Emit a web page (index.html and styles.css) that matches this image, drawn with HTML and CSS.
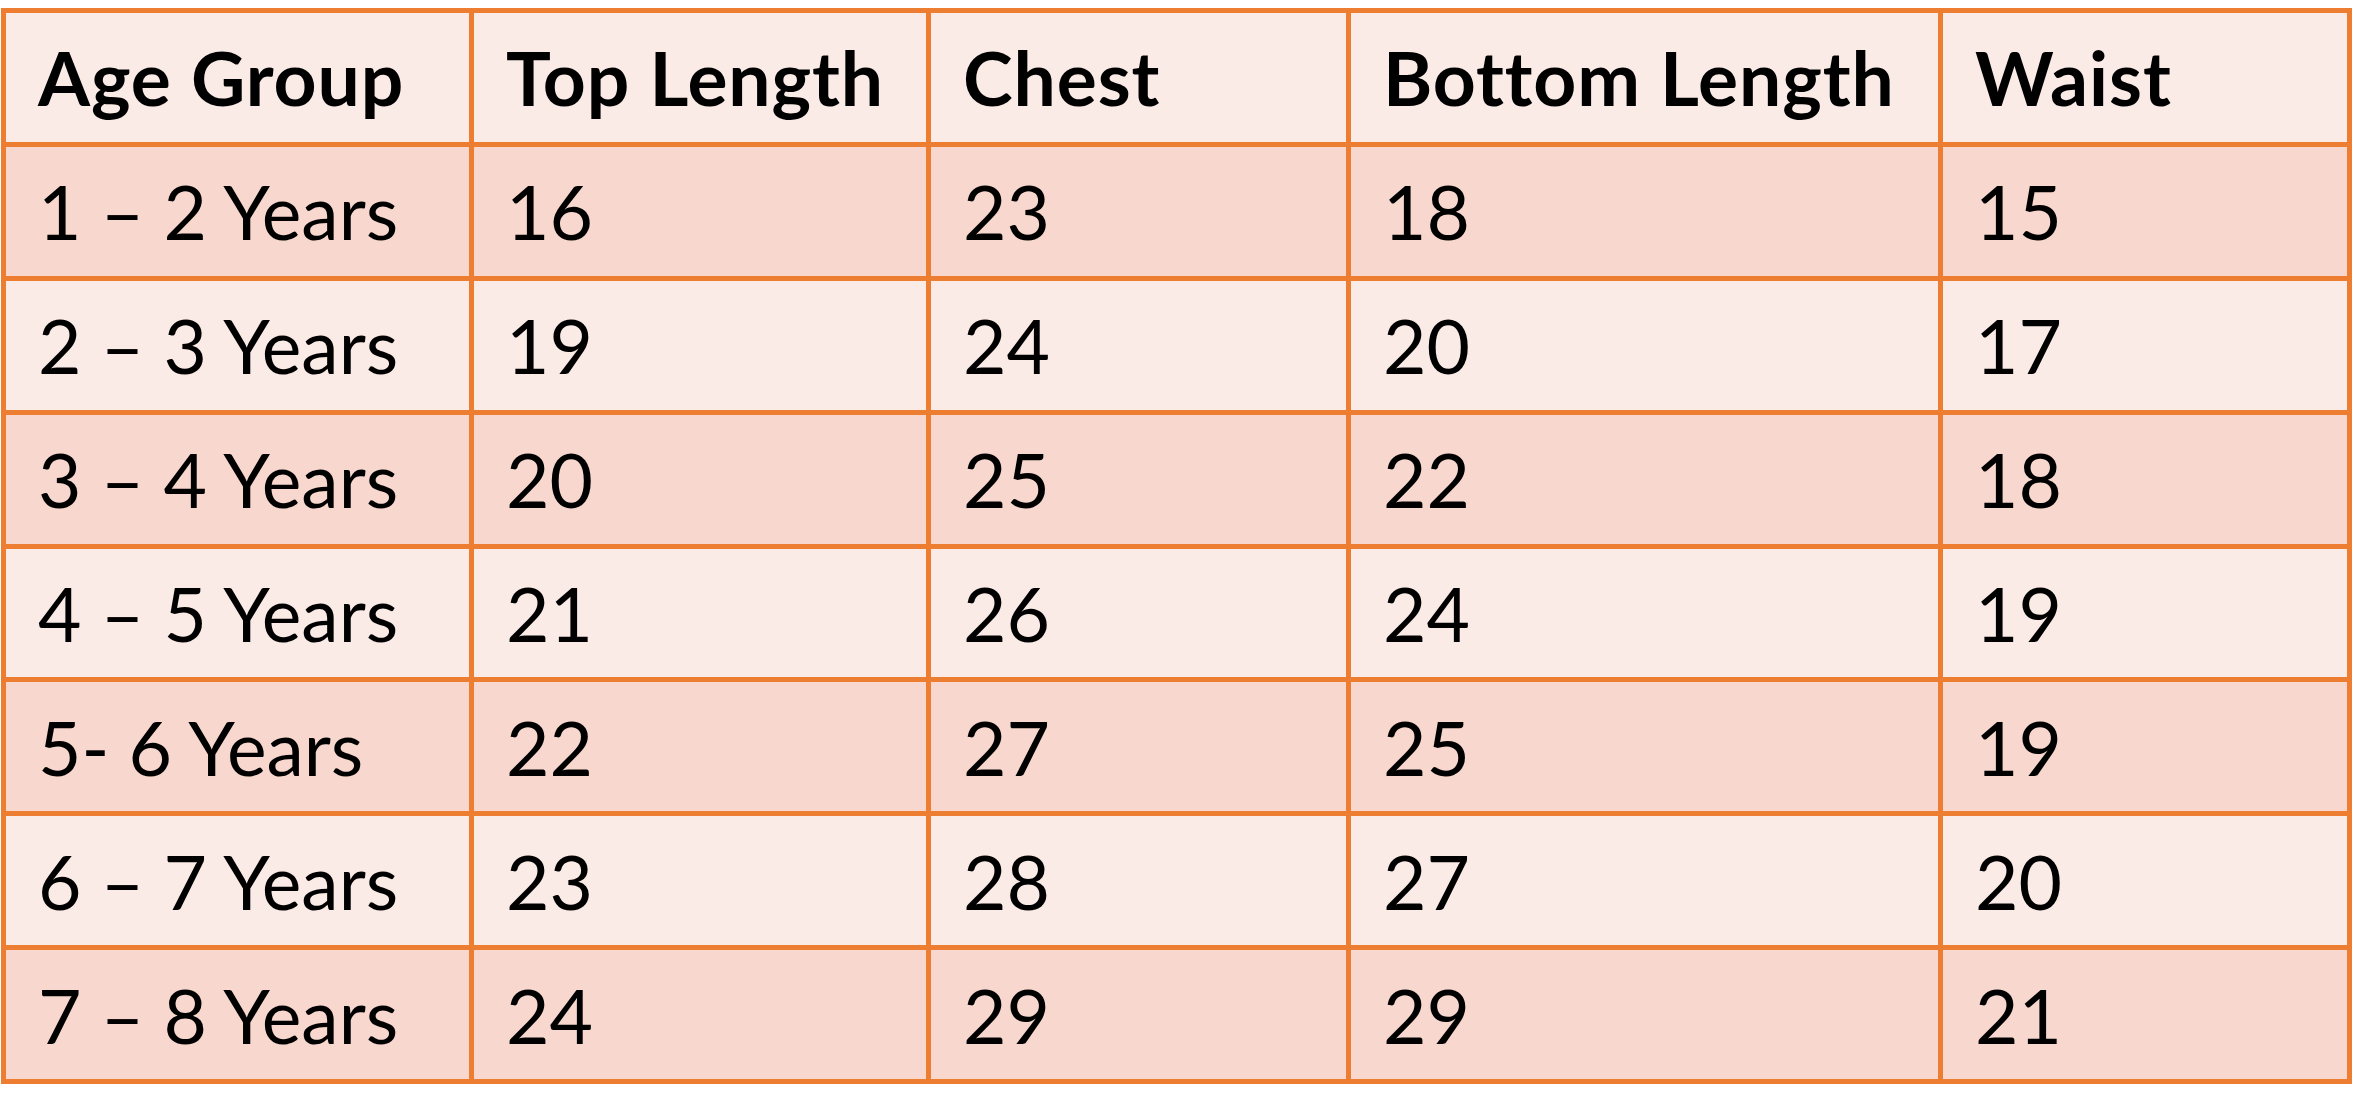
FILE: index.html
```html
<!DOCTYPE html>
<html lang="en">
<head>
<meta charset="utf-8">
<title>Size Chart</title>
<link rel="stylesheet" href="styles.css">
</head>
<body>
<table class="size-table">
  <colgroup>
    <col class="c1"><col class="c2"><col class="c3"><col class="c4"><col class="c5">
  </colgroup>
  <thead>
    <tr class="head">
      <th>Age Group</th><th>Top Length</th><th>Chest</th><th>Bottom Length</th><th>Waist</th>
    </tr>
  </thead>
  <tbody>
    <tr class="dark"><td>1 – 2 Years</td><td>16</td><td>23</td><td>18</td><td>15</td></tr>
    <tr class="light"><td>2 – 3 Years</td><td>19</td><td>24</td><td>20</td><td>17</td></tr>
    <tr class="dark"><td>3 – 4 Years</td><td>20</td><td>25</td><td>22</td><td>18</td></tr>
    <tr class="light"><td>4 – 5 Years</td><td>21</td><td>26</td><td>24</td><td>19</td></tr>
    <tr class="dark"><td>5- 6 Years</td><td>22</td><td>27</td><td>25</td><td>19</td></tr>
    <tr class="light"><td>6 – 7 Years</td><td>23</td><td>28</td><td>27</td><td>20</td></tr>
    <tr class="dark"><td>7 – 8 Years</td><td>24</td><td>29</td><td>29</td><td>21</td></tr>
  </tbody>
</table>
</body>
</html>
```
FILE: styles.css
```css
html, body {
  margin: 0;
  padding: 0;
  background: #ffffff;
}

body {
  padding: 8px 0 0 1px;
}

.size-table {
  border-collapse: collapse;
  table-layout: fixed;
  width: 2350px;
  font-family: Lato, "Open Sans", sans-serif;
  font-size: 75px;
  color: #000000;
}

.c1 { width: 468px; }
.c2 { width: 457px; }
.c3 { width: 420px; }
.c4 { width: 592px; }
.c5 { width: 409px; }

.size-table th,
.size-table td {
  border: 5px solid #ED7D31;
  height: 133.9px;
  padding: 0 0 0 32px;
  text-align: left;
  vertical-align: middle;
  white-space: nowrap;
  box-sizing: border-box;
}

.size-table th {
  font-weight: 700;
  letter-spacing: 0.9px;
}

.size-table td {
  font-weight: 400;
}

.head,
.light {
  background: #FBEBE7;
}

.dark {
  background: #F8D8CE;
}
```
